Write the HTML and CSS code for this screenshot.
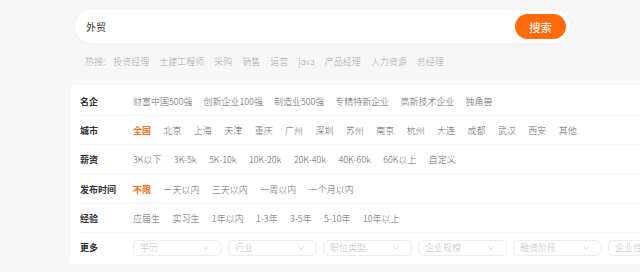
FILE: index.html
```html
<!DOCTYPE html>
<html lang="zh">
<head>
<meta charset="utf-8">
<link rel="stylesheet" href="styles.css">
</head>
<body>
<div class="top">
  <div class="search">
    <span class="query">外贸</span>
    <button class="btn">搜索</button>
  </div>
  <div class="hot">
    <span class="hot-label">热搜:</span>
    <span>投资经理</span><span>土建工程师</span><span>采购</span><span>销售</span><span>运营</span><span>java</span><span>产品经理</span><span>人力资源</span><span>总经理</span>
  </div>
</div>
<div class="card">
  <div class="row">
    <div class="label">名企</div>
    <div class="items tight">
      <span>财富中国500强</span><span>创新企业100强</span><span>制造业500强</span><span>专精特新企业</span><span>高新技术企业</span><span>独角兽</span>
    </div>
  </div>
  <div class="row">
    <div class="label">城市</div>
    <div class="items">
      <span class="on">全国</span><span>北京</span><span>上海</span><span>天津</span><span>重庆</span><span>广州</span><span>深圳</span><span>苏州</span><span>南京</span><span>杭州</span><span>大连</span><span>成都</span><span>武汉</span><span>西安</span><span>其他</span>
    </div>
  </div>
  <div class="row tall">
    <div class="label">薪资</div>
    <div class="items">
      <span>3K以下</span><span>3K-5k</span><span>5K-10k</span><span>10K-20k</span><span>20K-40k</span><span>40K-60k</span><span>60K以上</span><span>自定义</span>
    </div>
  </div>
  <div class="row">
    <div class="label">发布时间</div>
    <div class="items">
      <span class="on">不限</span><span>一天以内</span><span>三天以内</span><span>一周以内</span><span>一个月以内</span>
    </div>
  </div>
  <div class="row">
    <div class="label">经验</div>
    <div class="items">
      <span>应届生</span><span>实习生</span><span>1年以内</span><span>1-3年</span><span>3-5年</span><span>5-10年</span><span>10年以上</span>
    </div>
  </div>
  <div class="row last">
    <div class="label">更多</div>
    <div class="selects">
      <div class="sel"><span>学历</span><svg viewBox="0 0 10 6" class="chev"><path d="M1 1l4 4 4-4" fill="none" stroke="currentColor" stroke-width="1"/></svg></div>
      <div class="sel"><span>行业</span><svg viewBox="0 0 10 6" class="chev"><path d="M1 1l4 4 4-4" fill="none" stroke="currentColor" stroke-width="1"/></svg></div>
      <div class="sel"><span>职位类型</span><svg viewBox="0 0 10 6" class="chev"><path d="M1 1l4 4 4-4" fill="none" stroke="currentColor" stroke-width="1"/></svg></div>
      <div class="sel"><span>企业规模</span><svg viewBox="0 0 10 6" class="chev"><path d="M1 1l4 4 4-4" fill="none" stroke="currentColor" stroke-width="1"/></svg></div>
      <div class="sel"><span>融资阶段</span><svg viewBox="0 0 10 6" class="chev"><path d="M1 1l4 4 4-4" fill="none" stroke="currentColor" stroke-width="1"/></svg></div>
      <div class="sel"><span>企业性质</span><svg viewBox="0 0 10 6" class="chev"><path d="M1 1l4 4 4-4" fill="none" stroke="currentColor" stroke-width="1"/></svg></div>
    </div>
  </div>
</div>
</body>
</html>
```
FILE: styles.css
```css
* { box-sizing: border-box; }
html, body { margin: 0; padding: 0; }
body {
  width: 640px;
  height: 272px;
  overflow: hidden;
  background: #f7f7f7;
  font-family: "Noto Sans CJK SC", "Noto Sans", sans-serif;
  font-weight: 300;
  color: #666;
}
.top {
  padding: 10px 0 0 75px;
}
.search {
  width: 495px;
  height: 33px;
  background: #fff;
  border-radius: 17px;
  box-shadow: 0 1px 4px rgba(0,0,0,0.04);
  display: flex;
  align-items: center;
  justify-content: space-between;
  padding: 0 4px 0 11px;
}
.query {
  font-size: 10px;
  color: #333;
  font-weight: 400;
}
.btn {
  width: 51px;
  height: 25px;
  border: none;
  border-radius: 13px;
  background: #ff6a0d;
  color: #fff;
  font-family: inherit;
  font-size: 11.5px;
  font-weight: 400;
  padding: 0;
}
.hot {
  display: flex;
  gap: 10px;
  margin: 12px 0 0 10px;
  font-size: 9px;
  color: #a8a8a8;
  line-height: 14px;
}
.hot-label { margin-right: -2px; }
.card {
  margin: 16px 0 0 70px;
  width: 640px;
  background: #fff;
  border-radius: 4px;
  padding: 2px 0 2px 10px;
}
.row {
  display: flex;
  align-items: center;
  height: 29px;
  border-bottom: 1px solid #f2f2f2;
}
.row.tall { height: 30px; }
.row.last { border-bottom: none; height: 29px; }
.label {
  width: 53px;
  font-size: 9px;
  font-weight: bold;
  color: #333;
}
.items {
  display: flex;
  gap: 12.4px;
  font-size: 9px;
  white-space: nowrap;
}
.items.tight { gap: 11px; }
.items .on { color: #ff6a0d; font-weight: bold; }
.selects {
  display: flex;
  gap: 6px;
}
.sel {
  width: 89px;
  height: 16px;
  border: 1px solid #ececec;
  border-radius: 6px;
  display: flex;
  align-items: center;
  justify-content: space-between;
  padding: 0 12px 0 6px;
  font-size: 9px;
  color: #c0c0c0;
  flex: none;
}
.chev {
  width: 6px;
  height: 4px;
  color: #c0c0c0;
}
```
